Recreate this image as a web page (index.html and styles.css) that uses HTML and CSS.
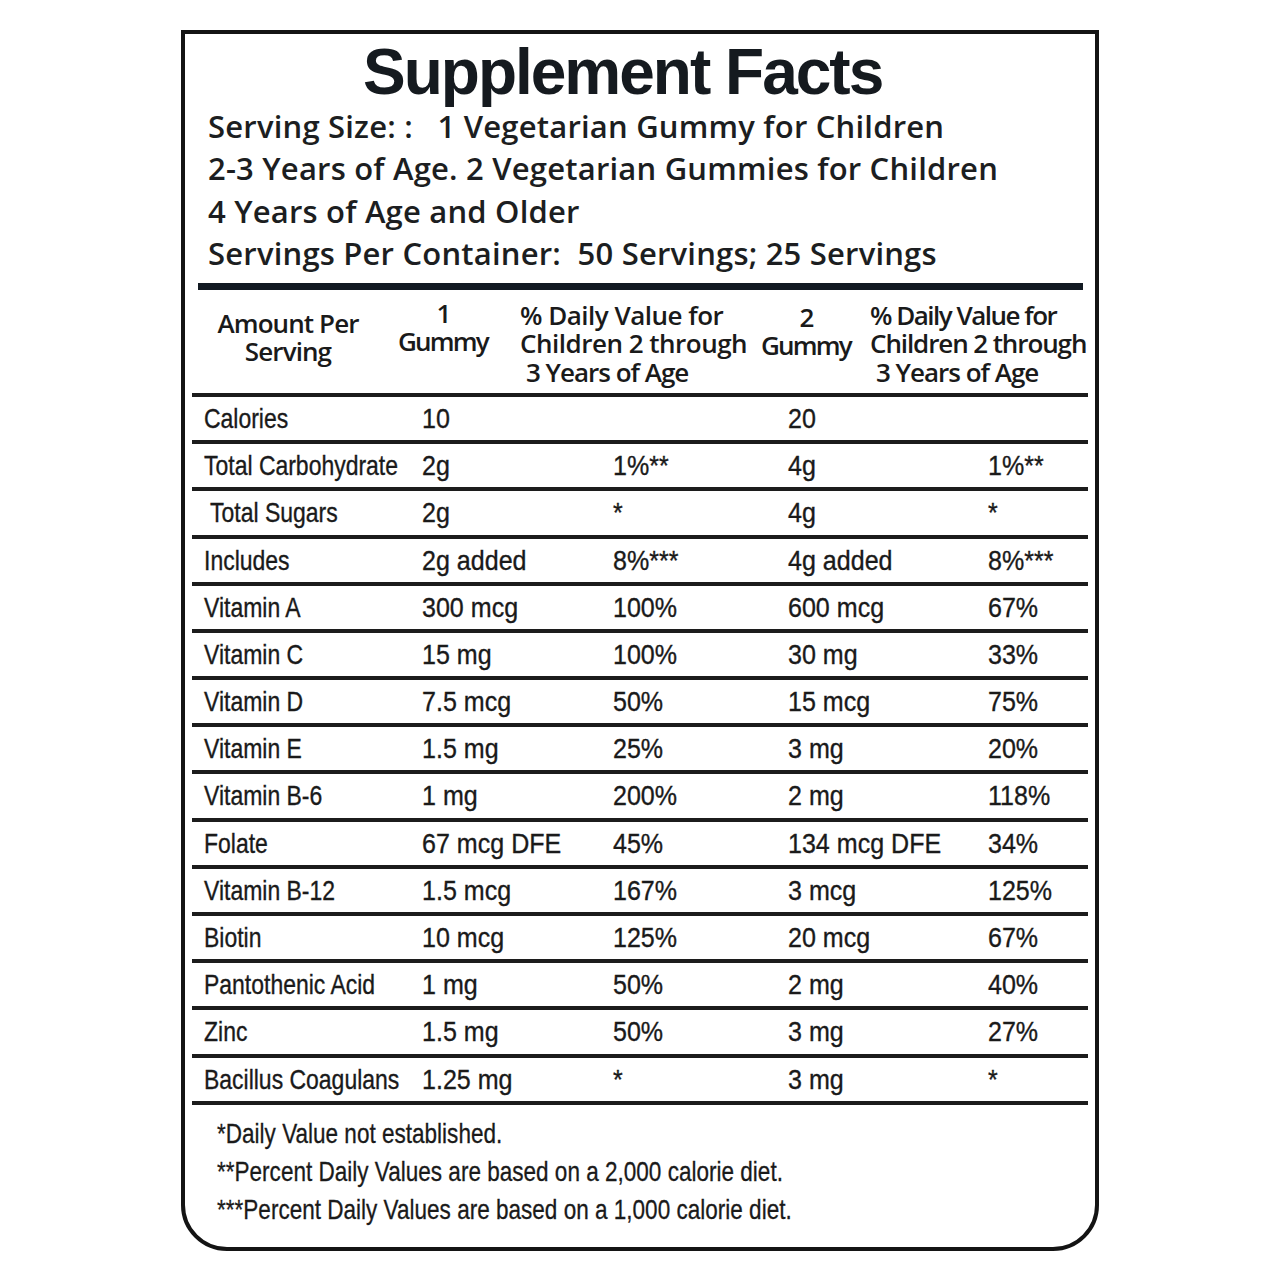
FILE: index.html
```html
<!DOCTYPE html>
<html lang="en">
<head>
<meta charset="utf-8">
<title>Supplement Facts</title>
<link rel="stylesheet" href="styles.css">
</head>
<body>
<div class="label">
  <h1 class="title">Supplement Facts</h1>
  <div class="serving">
    <div class="serving-line">Serving Size: :&nbsp;&nbsp;&nbsp;1 Vegetarian Gummy for Children</div>
    <div class="serving-line">2-3 Years of Age. 2 Vegetarian Gummies for Children</div>
    <div class="serving-line">4 Years of Age and Older</div>
    <div class="serving-line">Servings Per Container:&nbsp; 50 Servings; 25 Servings</div>
  </div>
  <div class="thick-rule"></div>
  <div class="table">
    <div class="head">
      <div class="h-amount"><div>Amount Per</div><div>Serving</div></div>
      <div class="h-qty h-qty1"><div>1</div><div>Gummy</div></div>
      <div class="h-dv"><div>% Daily Value for</div><div>Children 2 through</div><div class="indent">3 Years of Age</div></div>
      <div class="h-qty h-qty2"><div>2</div><div>Gummy</div></div>
      <div class="h-dv h-dv2"><div class="l1">% Daily Value for</div><div class="l2">Children 2 through</div><div class="indent">3 Years of Age</div></div>
    </div>
    <div class="row"><span class="name">Calories</span><span>10</span><span></span><span>20</span><span></span></div>
    <div class="row"><span class="name">Total Carbohydrate</span><span>2g</span><span>1%**</span><span>4g</span><span>1%**</span></div>
    <div class="row"><span class="name sub">Total Sugars</span><span>2g</span><span>*</span><span>4g</span><span>*</span></div>
    <div class="row"><span class="name">Includes</span><span>2g added</span><span>8%***</span><span>4g added</span><span>8%***</span></div>
    <div class="row"><span class="name">Vitamin A</span><span>300 mcg</span><span>100%</span><span>600 mcg</span><span>67%</span></div>
    <div class="row"><span class="name">Vitamin C</span><span>15 mg</span><span>100%</span><span>30 mg</span><span>33%</span></div>
    <div class="row"><span class="name">Vitamin D</span><span>7.5 mcg</span><span>50%</span><span>15 mcg</span><span>75%</span></div>
    <div class="row"><span class="name">Vitamin E</span><span>1.5 mg</span><span>25%</span><span>3 mg</span><span>20%</span></div>
    <div class="row"><span class="name">Vitamin B-6</span><span>1 mg</span><span>200%</span><span>2 mg</span><span>118%</span></div>
    <div class="row"><span class="name">Folate</span><span>67 mcg DFE</span><span>45%</span><span>134 mcg DFE</span><span>34%</span></div>
    <div class="row"><span class="name">Vitamin B-12</span><span>1.5 mcg</span><span>167%</span><span>3 mcg</span><span>125%</span></div>
    <div class="row"><span class="name">Biotin</span><span>10 mcg</span><span>125%</span><span>20 mcg</span><span>67%</span></div>
    <div class="row"><span class="name">Pantothenic Acid</span><span>1 mg</span><span>50%</span><span>2 mg</span><span>40%</span></div>
    <div class="row"><span class="name">Zinc</span><span>1.5 mg</span><span>50%</span><span>3 mg</span><span>27%</span></div>
    <div class="row"><span class="name">Bacillus Coagulans</span><span>1.25 mg</span><span>*</span><span>3 mg</span><span>*</span></div>
  </div>
  <div class="notes">
    <div class="note">*Daily Value not established.</div>
    <div class="note">**Percent Daily Values are based on a 2,000 calorie diet.</div>
    <div class="note">***Percent Daily Values are based on a 1,000 calorie diet.</div>
  </div>
</div>
</body>
</html>
```
FILE: styles.css
```css
html, body {
  margin: 0;
  padding: 0;
  background: #ffffff;
}

body {
  padding: 30px 0 0 181px;
  color: #1a1a1a;
}

.label {
  width: 910px;
  border: 4px solid #141414;
  border-radius: 0 0 46px 46px;
  padding: 5.6px 0 18px 0;
  box-sizing: content-box;
}

.title {
  margin: 0;
  padding-left: 178px;
  font-family: "Liberation Sans", Arial, sans-serif;
  font-weight: 700;
  font-size: 64px;
  line-height: 64px;
  letter-spacing: -2px;
  color: #151a1f;
}

.serving {
  margin-top: 1.4px;
  padding-left: 23px;
  font-family: "Open Sans", sans-serif;
  font-weight: 600;
  font-size: 31px;
  line-height: 42.5px;
  color: #1c1e21;
  letter-spacing: 0.2px;
  white-space: nowrap;
}

.thick-rule {
  margin: 8px 12px 0 13px;
  height: 7px;
  background: #121a22;
}

.table {
  margin: 0 7px;
}

.head {
  display: grid;
  grid-template-columns: 192px 118px 258px 92px 1fr;
  height: 103px;
  border-bottom: 4px solid #1c1c1c;
  font-family: "Open Sans", sans-serif;
  font-weight: 600;
  font-size: 26px;
  line-height: 28.5px;
  color: #1a1a1a;
  white-space: nowrap;
}

.h-amount {
  text-align: center;
  padding-top: 19px;
  letter-spacing: -0.9px;
}

.h-qty {
  text-align: center;
  letter-spacing: -1.8px;
}

.h-qty1 {
  padding-top: 9px;
}

.h-qty2 {
  padding-top: 13px;
}

.h-dv {
  padding-top: 11px;
  padding-left: 18px;
  letter-spacing: -0.5px;
}

.h-dv .indent {
  padding-left: 6px;
  letter-spacing: -1px;
}

.h-dv2 .l1 {
  letter-spacing: -1.5px;
}

.h-dv2 .l2 {
  letter-spacing: -1.1px;
}

.row {
  display: grid;
  grid-template-columns: 230px 191px 175px 200px 1fr;
  height: 43.2px;
  border-bottom: 4px solid #1c1c1c;
  font-family: "Liberation Sans", Arial, sans-serif;
  font-size: 28px;
  line-height: 43.2px;
  color: #1a1a1a;
  white-space: nowrap;
  -webkit-text-stroke: 0.35px #1a1a1a;
}

.row > span {
  display: block;
  transform: scaleX(0.895);
  transform-origin: 0 50%;
}

.row > span.name {
  transform: scaleX(0.82);
  margin-left: 12px;
}

.row > span.name.sub {
  margin-left: 18px;
}

.notes {
  margin-top: 10px;
  padding-left: 32px;
  font-family: "Liberation Sans", Arial, sans-serif;
  font-size: 28px;
  line-height: 38px;
  color: #1a1a1a;
  white-space: nowrap;
  -webkit-text-stroke: 0.3px #1a1a1a;
}

.note {
  transform: scaleX(0.805);
  transform-origin: 0 50%;
}
```
